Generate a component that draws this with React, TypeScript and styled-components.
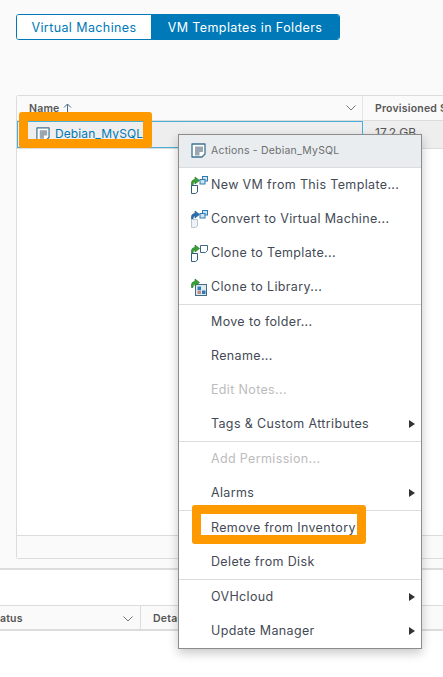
import React from "react";
import styled, { createGlobalStyle } from "styled-components";

const Global = createGlobalStyle`
  html, body { margin: 0; padding: 0; background: #fff; }
  body { font-family: "Inter", "Noto Sans", sans-serif; overflow: hidden; }
`;

const Page = styled.div`
  position: relative;
  width: 443px;
  height: 677px;
  overflow: hidden;
  display: flex;
  flex-direction: column;
  background: #fff;
`;
const Upper = styled.section`
  height: 570px;
  box-sizing: border-box;
  background: #fafafa;
  padding: 14px 0 0 16px;
  border-bottom: 2px solid #dcdcdc;
  display: flex;
  flex-direction: column;
`;
const Tabs = styled.div`
  display: inline-flex;
  align-self: flex-start;
  height: 26px;
  box-sizing: border-box;
  border: 1px solid #0079b8;
  border-radius: 3px;
  overflow: hidden;
`;
const Tab = styled.div<{ $active?: boolean }>`
  display: flex;
  align-items: center;
  justify-content: center;
  width: ${(p) => (p.$active ? "188px" : "134px")};
  font-size: 12.5px;
  letter-spacing: 0.4px;
  background: ${(p) => (p.$active ? "#0079b8" : "#fff")};
  color: ${(p) => (p.$active ? "#fff" : "#0079b8")};
`;
const Table = styled.div`
  margin-top: 55px;
  width: 460px;
  height: 464px;
  box-sizing: border-box;
  border: 1px solid #dcdcdc;
  border-right: 0;
  border-radius: 3px 0 0 3px;
  display: flex;
  flex-direction: column;
  background: #fff;
`;
const HeadRow = styled.div`
  display: flex;
  height: 24px;
  background: #fafafa;
  border-bottom: 1px solid #dcdcdc;
  flex: none;
`;
const HeadCell = styled.div<{ $w: number }>`
  width: ${(p) => p.$w}px;
  flex: none;
  box-sizing: border-box;
  padding: 0 6px 0 12px;
  display: flex;
  align-items: center;
  justify-content: space-between;
  font-size: 10.5px;
  font-weight: 600;
  letter-spacing: 0.2px;
  color: #565656;
  white-space: nowrap;
  border-right: 1px solid #e4e4e4;
`;
const HeadLabel = styled.span`
  display: flex;
  align-items: center;
  gap: 4px;
`;
const DataRow = styled.div`
  display: flex;
  height: 27px;
  flex: none;
  background: #eeeeee;
  border-bottom: 1px solid #dcdcdc;
`;
const NameCell = styled.div`
  width: 346px;
  box-sizing: border-box;
  flex: none;
  border: 1px solid #49afd9;
  display: flex;
  align-items: center;
  gap: 5px;
  padding: 0 0 2px 18px;
  font-size: 12px;
  letter-spacing: 0.1px;
  color: #0079b8;
  background: #eeeeee;
`;
const SizeCell = styled.div`
  padding: 4px 0 0 12px;
  font-size: 12px;
  color: #565656;
`;
const TableBody = styled.div`
  flex: 1;
  background: #fff;
`;
const TableFoot = styled.div`
  height: 22px;
  flex: none;
  background: #fafafa;
  border-top: 1px solid #dcdcdc;
`;
const Lower = styled.section`
  flex: 1;
  background: #fff;
  padding-top: 35px;
`;
const LowerHead = styled.div`
  display: flex;
  height: 26px;
  box-sizing: border-box;
  background: #fafafa;
  border-top: 1px solid #dcdcdc;
  border-bottom: 2px solid #dcdcdc;
`;
const StatusCell = styled.div`
  width: 141px;
  flex: none;
  box-sizing: border-box;
  border-right: 1px solid #dcdcdc;
  display: flex;
  align-items: center;
  justify-content: space-between;
  padding: 2px 7px 0 0;
  font-size: 10.5px;
  font-weight: 600;
  letter-spacing: 0.2px;
  color: #565656;
  overflow: hidden;
`;
const Clip = styled.span`
  margin-left: -11px;
`;
const DetailCell = styled.div`
  padding: 2px 0 0 12px;
  display: flex;
  align-items: center;
  font-size: 10.5px;
  font-weight: 600;
  letter-spacing: 0.2px;
  color: #565656;
`;
const Menu = styled.div`
  position: absolute;
  left: 178px;
  top: 134px;
  width: 244px;
  height: 515px;
  box-sizing: border-box;
  background: #fff;
  border: 1px solid #8c8c8c;
  box-shadow: 0 4px 10px rgba(0, 0, 0, 0.22);
  display: flex;
  flex-direction: column;
`;
const MenuHeader = styled.div`
  height: 33px;
  flex: none;
  box-sizing: border-box;
  background: #e9edf0;
  border-bottom: 1px solid #dcdcdc;
  display: flex;
  align-items: center;
  gap: 5px;
  padding: 0 0 1px 12px;
  font-size: 10.5px;
  letter-spacing: 0.2px;
  color: #6f6f6f;
`;
const Item = styled.div<{ $disabled?: boolean; $divider?: boolean }>`
  position: relative;
  height: ${(p) => (p.$divider ? "35px" : "34px")};
  flex: none;
  box-sizing: border-box;
  display: flex;
  align-items: center;
  padding: 0 0 2px 32px;
  font-size: 12.5px;
  letter-spacing: 0.35px;
  color: ${(p) => (p.$disabled ? "#bcbcbc" : "#444a55")};
  border-bottom: ${(p) => (p.$divider ? "1px solid #dcdcdc" : "0")};
`;
const IconSlot = styled.span`
  position: absolute;
  left: 11px;
  top: 50%;
  margin-top: -9px;
  width: 18px;
  height: 18px;
  display: block;
`;
const Arrow = styled.span`
  position: absolute;
  right: 6px;
  top: 50%;
  margin-top: -4px;
  width: 0;
  height: 0;
  border-left: 6px solid #333;
  border-top: 4px solid transparent;
  border-bottom: 4px solid transparent;
`;
const Highlight = styled.div<{ $x: number; $y: number; $w: number; $h: number }>`
  position: absolute;
  left: ${(p) => p.$x}px;
  top: ${(p) => p.$y}px;
  width: ${(p) => p.$w}px;
  height: ${(p) => p.$h}px;
  box-sizing: border-box;
  border: 9px solid #ff9900;
  border-radius: 3px;
  pointer-events: none;
`;

const DocIcon = ({ size = 15 }: { size?: number }) => (
  <svg width={size} height={size} viewBox="0 0 15 15" style={{ flex: "none" }}>
    <path d="M1 1h13v10l-3 3H1z" fill="#fff" stroke="#3f7391" strokeWidth="1.3" strokeLinejoin="round" />
    <path d="M4 3.500h8V9H8.500v3.500H4z" fill="#9aa7b0" />
  </svg>
);
const Chevron = () => (
  <svg width="10" height="6" viewBox="0 0 10 6">
    <path d="M0.500 0.500 5 5l4.500-4.500" fill="none" stroke="#777" strokeWidth="1" />
  </svg>
);
const SortUp = () => (
  <svg width="9" height="10" viewBox="0 0 9 10">
    <path d="M4.500 10V1M1 4.500 4.500 1 8 4.500" fill="none" stroke="#4a6f8c" strokeWidth="1" />
  </svg>
);
const CurveArrow = ({ fill, edge }: { fill: string; edge: string }) => (
  <path
    d="M1.500 9.500V6.500C1.500 4.500 3.500 3.500 5 3.500V1L9.500 4.500 5 8V6C3.800 6 3 6.800 3 9.500z"
    fill={fill}
    stroke={edge}
    strokeWidth="0.6"
  />
);
const SmallDoc = ({ faded }: { faded?: boolean }) => (
  <path
    d="M1.500 9.500h6v6.500l-2 1.500h-4z"
    fill={faded ? "#eef2f6" : "#fff"}
    stroke={faded ? "#b5c6d4" : "#2f5f7f"}
  />
);
const Vms = () => (
  <g fill="#cfe3f3" stroke="#2f7cb5">
    <rect x="12.500" y="0.500" width="5" height="4.500" />
    <rect x="10" y="3.500" width="5" height="4.500" />
  </g>
);
const NewVmIcon = () => (
  <svg width="18" height="18" viewBox="0 0 18 18">
    <CurveArrow fill="#37a337" edge="#1d6b1d" />
    <SmallDoc />
    <Vms />
  </svg>
);
const ConvertIcon = () => (
  <svg width="18" height="18" viewBox="0 0 18 18">
    <CurveArrow fill="#2a6fb0" edge="#1c4f80" />
    <SmallDoc faded />
    <Vms />
  </svg>
);
const CloneTplIcon = () => (
  <svg width="18" height="18" viewBox="0 0 18 18">
    <CurveArrow fill="#37a337" edge="#1d6b1d" />
    <SmallDoc />
    <path d="M10.500 1.500h7v5l-2 2h-5z" fill="#fff" stroke="#3f6a88" />
  </svg>
);
const LibraryIcon = () => (
  <svg width="18" height="18" viewBox="0 0 18 18">
    <rect x="5.500" y="6.500" width="11" height="11" fill="#dfe9f1" stroke="#3f6a88" />
    <rect x="7.500" y="8.500" width="3.500" height="3.500" fill="#2f7cb5" />
    <rect x="12" y="12.500" width="3.500" height="3.500" fill="#2f7cb5" />
    <rect x="7.500" y="12.500" width="3.500" height="3.500" fill="#c08a8a" />
    <CurveArrow fill="#37a337" edge="#1d6b1d" />
  </svg>
);

export default function App() {
  return (
    <Page>
      <Global />
      <Upper>
        <Tabs>
          <Tab>Virtual Machines</Tab>
          <Tab $active>VM Templates in Folders</Tab>
        </Tabs>
        <Table>
          <HeadRow>
            <HeadCell $w={346}>
              <HeadLabel>Name <SortUp /></HeadLabel>
              <Chevron />
            </HeadCell>
            <HeadCell $w={120}>Provisioned Space</HeadCell>
          </HeadRow>
          <DataRow>
            <NameCell>
              <DocIcon size={14} />
              Debian_MySQL
            </NameCell>
            <SizeCell>17.2 GB</SizeCell>
          </DataRow>
          <TableBody />
          <TableFoot />
        </Table>
      </Upper>
      <Lower>
        <LowerHead>
          <StatusCell>
            <Clip>Status</Clip>
            <Chevron />
          </StatusCell>
          <DetailCell>Details</DetailCell>
        </LowerHead>
      </Lower>
      <Menu>
        <MenuHeader>
          <DocIcon />
          Actions - Debian_MySQL
        </MenuHeader>
        <Item><IconSlot><NewVmIcon /></IconSlot>New VM from This Template...</Item>
        <Item><IconSlot><ConvertIcon /></IconSlot>Convert to Virtual Machine...</Item>
        <Item><IconSlot><CloneTplIcon /></IconSlot>Clone to Template...</Item>
        <Item $divider><IconSlot><LibraryIcon /></IconSlot>Clone to Library...</Item>
        <Item>Move to folder...</Item>
        <Item>Rename...</Item>
        <Item $disabled>Edit Notes...</Item>
        <Item $divider>Tags &amp; Custom Attributes<Arrow /></Item>
        <Item $disabled>Add Permission...</Item>
        <Item $divider>Alarms<Arrow /></Item>
        <Item>Remove from Inventory</Item>
        <Item $divider>Delete from Disk</Item>
        <Item>OVHcloud<Arrow /></Item>
        <Item>Update Manager<Arrow /></Item>
      </Menu>
      <Highlight $x={19} $y={112} $w={133} $h={36} />
      <Highlight $x={192} $y={505} $w={174} $h={39} />
    </Page>
  );
}
